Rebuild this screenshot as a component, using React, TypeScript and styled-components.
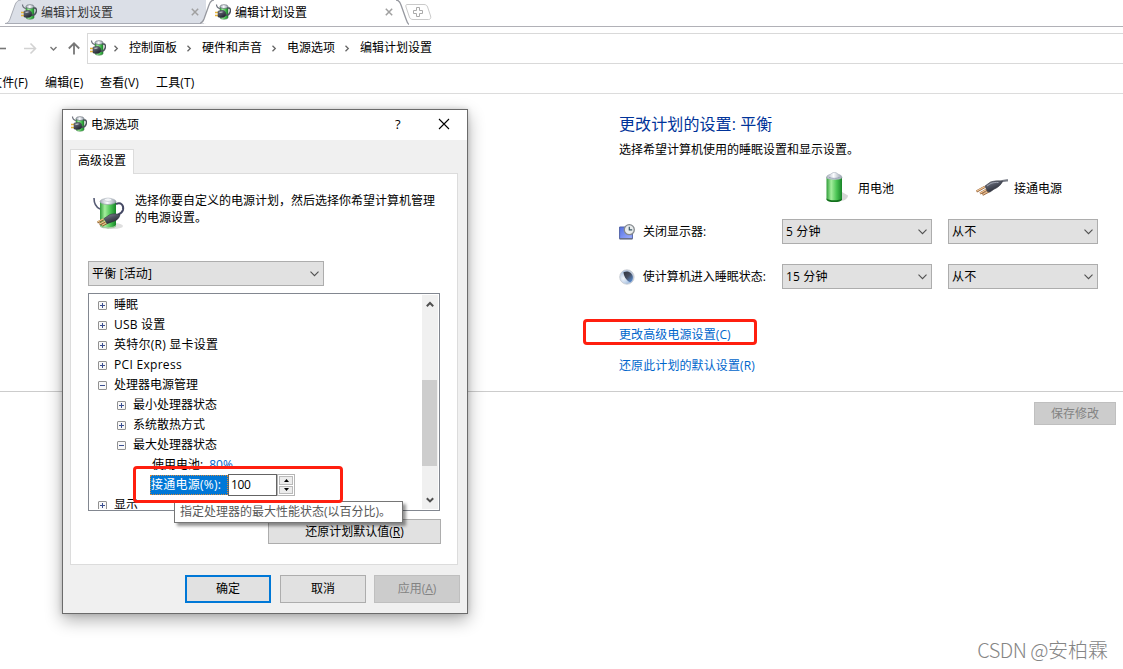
import styled, { createGlobalStyle } from 'styled-components';

const GlobalStyle = createGlobalStyle`
  * {
    box-sizing: border-box;
  }

  body {
    margin: 0;
    background: #fff;
    font-family: 'Open Sans', 'Noto Sans CJK SC', sans-serif;
    font-size: 12px;
    line-height: 17px;
    color: #000;
  }

  button, input {
    font: inherit;
  }
`;

const Screen = styled.div`
  position: relative;
  display: flex;
  flex-direction: column;
  width: 1123px;
  height: 669px;
  overflow: hidden;
  white-space: nowrap;
`;

/* ---------- browser like chrome ---------- */

const TabStrip = styled.div`
  display: flex;
  height: 27px;
  padding-left: 5px;
  border-bottom: 1px solid #b1b1b7;
`;

const Tab = styled.div<{ $width: number; $active?: boolean }>`
  position: relative;
  display: flex;
  flex: none;
  width: ${({ $width }) => $width}px;
  height: 25px;
  padding: ${({ $active }) => ($active ? '4px 16px 0 15px' : '4px 7px 0 16px')};
  margin-left: ${({ $active }) => ($active ? '-6px' : '0')};
  color: ${({ $active }) => ($active ? '#000' : '#333')};
`;

const TabShape = styled.svg`
  position: absolute;
  left: 0;
  top: 0;
`;

const TabLabel = styled.span`
  position: relative;
  flex: 1;
  padding-left: 4px;
  line-height: 17px;
`;

const TabIcon = styled.span`
  position: relative;
  height: 16px;
`;

const TabClose = styled.svg`
  position: relative;
  margin-top: 4px;
`;

const NewTab = styled.svg`
  margin: 3px 0 0 -5px;
`;

const NavRow = styled.div`
  display: flex;
  align-items: center;
  height: 31px;
  margin-top: 6px;
`;

const NavButtons = styled.svg`
  flex: none;
`;

const AddressBar = styled.div`
  display: flex;
  align-items: center;
  flex: 1;
  height: 31px;
  padding: 0 0 2px 2px;
  border: 1px solid #d9d9d9;
  border-right: 0;
`;

const Crumb = styled.span`
  display: flex;
  align-items: center;

  svg {
    margin: 2px 9px 0 8px;
  }

  &:nth-child(2) svg {
    margin-left: 6px;
  }
`;

const MenuRow = styled.div`
  display: flex;
  gap: 16px;
  height: 30px;
  padding-top: 10px;
  margin-left: -10px;
  border-bottom: 1px solid #dcdcdc;
`;

const MenuItem = styled.span<{ $width: number }>`
  width: ${({ $width }) => $width}px;
  letter-spacing: 0.15px;
`;

/* ---------- plan settings page ---------- */

const PlanPage = styled.main`
  height: 298px;
  padding: 19px 0 0 619px;
  border-bottom: 1px solid #ccc;
`;

const PlanTitle = styled.h1`
  margin: 0;
  font-size: 16px;
  font-weight: 400;
  line-height: 22px;
  letter-spacing: 0.1px;
  color: #003399;
`;

const PlanHint = styled.p`
  margin: 6px 0 0;
`;

const SettingsGrid = styled.div`
  display: grid;
  grid-template-columns: 147px 150px 150px;
  grid-template-rows: 56px 45px 25px;
  column-gap: 16px;
  align-items: start;
  margin-top: 5px;
`;

const ColumnHeader = styled.div<{ $indent: number; $gap: number }>`
  display: flex;
  align-items: center;
  gap: ${({ $gap }) => $gap}px;
  height: 50px;
  padding-left: ${({ $indent }) => $indent}px;
`;

const SettingLabel = styled.div`
  display: flex;
  align-items: center;
  gap: 8px;
  height: 25px;
`;

const Select = styled.div<{ $width: number }>`
  display: flex;
  align-items: center;
  justify-content: space-between;
  width: ${({ $width }) => $width}px;
  height: 25px;
  padding: 0 4px 0 3px;
  border: 1px solid #adadad;
  background: #e1e1e1;
  letter-spacing: 0.15px;
`;

const Links = styled.div`
  display: flex;
  flex-direction: column;
  gap: 14px;
  padding-top: 37px;
`;

const Link = styled.a`
  height: 17px;
  color: #0066cc;
  letter-spacing: 0.1px;
`;

const PlanFooter = styled.footer`
  display: flex;
  justify-content: flex-end;
  padding: 10px 7px 0 0;
`;

const Watermark = styled.div`
  position: absolute;
  right: 15px;
  bottom: 5px;
  font-family: 'Noto Sans CJK SC', sans-serif;
  font-size: 20px;
  font-weight: 300;
  line-height: 28px;
  color: #858585;

  span {
    letter-spacing: -0.5px;
  }
`;

/* ---------- dialog ---------- */

const Dialog = styled.section`
  position: absolute;
  left: 62px;
  top: 109px;
  display: flex;
  flex-direction: column;
  width: 406px;
  height: 505px;
  border: 1px solid #6b6b6b;
  background: #f0f0f0;
  box-shadow: 0 6px 16px rgba(0, 0, 0, 0.32), 0 0 5px rgba(0, 0, 0, 0.16);
`;

const TitleBar = styled.header`
  display: flex;
  align-items: center;
  height: 30px;
  padding: 0 17px 2px 8px;
  background: #fff;
`;

const TitleText = styled.span`
  flex: 1;
  padding-left: 4px;
`;

const HelpMark = styled.span`
  width: 43px;
  font-size: 13px;
`;

const SheetTab = styled.div`
  position: relative;
  width: 64px;
  height: 25px;
  margin: 9px 0 0 7px;
  padding: 2px 0 0 7px;
  border: 1px solid #dcdcdc;
  border-bottom: 0;
  background: #fff;
`;

const Sheet = styled.div`
  width: 388px;
  height: 392px;
  margin: -1px 0 0 7px;
  padding: 19px 0 0 17px;
  border: 1px solid #dcdcdc;
  background: #fff;
`;

const Intro = styled.div`
  display: flex;
  height: 68px;
  padding-left: 5px;

  svg {
    margin-top: 4px;
  }

  p {
    margin: -1px 0 0 10px;
    line-height: 17px;
  }
`;

const Tree = styled.div`
  position: relative;
  width: 352px;
  height: 218px;
  margin-top: 7px;
  border: 1px solid #828790;
  overflow: hidden;
`;

const TreeBody = styled.div`
  height: 215px;
  padding-top: 1px;
  overflow: hidden;
`;

const TreeRow = styled.div<{ $level: number }>`
  display: flex;
  align-items: center;
  height: 20px;
  padding-left: ${({ $level }) => 9 + $level * 19}px;
  line-height: 18px;
`;

const TreeText = styled.span<{ $spacing?: number }>`
  padding: 0 0 1px 7px;
  letter-spacing: ${({ $spacing }) => $spacing ?? 0}px;
`;

const LeafText = styled.span`
  padding-left: 16px;
`;

const LeafValue = styled.span`
  padding-left: 6px;
  color: #0066cc;
`;

const SelectedLabel = styled.span`
  width: 78px;
  height: 20px;
  margin-left: 14px;
  padding-left: 1px;
  outline: 1px dotted #d98a3a;
  outline-offset: -1px;
  background: #0078d7;
  color: #fff;
  line-height: 19px;
  letter-spacing: 0.25px;
`;

const ValueInput = styled.input`
  width: 49px;
  height: 22px;
  padding: 0 2px 2px;
  border: 1px solid #646464;
  outline: none;
  letter-spacing: -0.4px;
`;

const Spinner = styled.div`
  display: flex;
  flex-direction: column;
  width: 18px;
  height: 22px;
  padding: 1px;
  gap: 1px;
  border: 1px solid #b5b5b5;
  background: #fff;
`;

const SpinButton = styled.span`
  display: flex;
  flex: 1;
  align-items: center;
  justify-content: center;
  border: 1px solid #bababa;
  background: #ececec;
`;

const ScrollBar = styled.div`
  position: absolute;
  right: 1px;
  top: 1px;
  display: flex;
  flex-direction: column;
  align-items: center;
  width: 16px;
  height: 214px;
  padding: 6px 0 5px;
  background: #f0f0f0;

  svg:last-child {
    margin-top: auto;
  }
`;

const ScrollThumb = styled.div`
  width: 15px;
  height: 86px;
  margin: 72px 1px 0 0;
  background: #cdcdcd;
`;

const Button = styled.button<{ $width: number; $height: number; $primary?: boolean }>`
  width: ${({ $width }) => $width}px;
  height: ${({ $height }) => $height}px;
  margin-right: ${({ $primary }) => ($primary ? 1 : 0)}px;
  padding: 0 0 1px;
  border: ${({ $primary }) => ($primary ? '2px solid #0078d7' : '1px solid #adadad')};
  background: #e1e1e1;
  color: #000;
  line-height: 17px;

  &:disabled {
    border-color: #bfbfbf;
    background: #ccc;
    color: #838383;
  }
`;

const RestoreRow = styled.div`
  display: flex;
  padding: 8px 0 0 180px;
`;

const DialogButtons = styled.footer`
  display: flex;
  justify-content: flex-end;
  gap: 8px;
  padding: 10px 7px 0 0;
`;

const Tooltip = styled.div`
  position: absolute;
  left: 174px;
  top: 501px;
  width: 229px;
  height: 22px;
  padding: 1px 5px;
  border: 1px solid #767676;
  background: #fff;
  box-shadow: 3px 3px 3px rgba(0, 0, 0, 0.42);
  color: #575757;
`;

const Marker = styled.div<{ $x: number; $y: number; $w: number; $h: number }>`
  position: absolute;
  left: ${({ $x }) => $x}px;
  top: ${({ $y }) => $y}px;
  width: ${({ $w }) => $w}px;
  height: ${({ $h }) => $h}px;
  border: 3px solid #ff1f0f;
  border-radius: 4px;
`;

/* ---------- icons ---------- */

const Defs = styled.svg`
  position: absolute;
`;

const Gradients = () => (
  <Defs width="0" height="0" aria-hidden="true">
    <defs>
      <linearGradient id="cell" x1="0" x2="1">
        <stop offset="0" stopColor="#2f9d39" />
        <stop offset="0.3" stopColor="#a4ee9d" />
        <stop offset="0.65" stopColor="#4cc455" />
        <stop offset="1" stopColor="#178427" />
      </linearGradient>
      <linearGradient id="cap" x1="0" x2="1">
        <stop offset="0" stopColor="#a5adb9" />
        <stop offset="0.45" stopColor="#fbfcff" />
        <stop offset="1" stopColor="#98a1ad" />
      </linearGradient>
      <linearGradient id="plug" x1="0" y1="0" x2="0.6" y2="1">
        <stop offset="0" stopColor="#8a8e9c" />
        <stop offset="0.5" stopColor="#4e525f" />
        <stop offset="1" stopColor="#23252f" />
      </linearGradient>
      <linearGradient id="screen" x1="0" y1="0" x2="1" y2="1">
        <stop offset="0" stopColor="#5470e2" />
        <stop offset="1" stopColor="#a0b0ff" />
      </linearGradient>
      <radialGradient id="moon" cx="0.25" cy="0.6" r="0.8">
        <stop offset="0" stopColor="#f2f6fb" />
        <stop offset="0.6" stopColor="#a9c2e2" />
        <stop offset="1" stopColor="#c9cfd8" />
      </radialGradient>
      <linearGradient id="night" x1="0" y1="0" x2="0.8" y2="1">
        <stop offset="0" stopColor="#30343e" />
        <stop offset="0.5" stopColor="#444c5e" />
        <stop offset="1" stopColor="#5b8fd6" />
      </linearGradient>
    </defs>
  </Defs>
);

const PowerIcon = () => (
  <svg width="16" height="16" viewBox="0 0 16 16">
    <path d="M5 3v10.5c0 2.2 8 2.2 8 0V3z" fill="url(#cell)" stroke="#387b3e" strokeWidth="0.6" />
    <ellipse cx="9" cy="2.6" rx="4" ry="1.9" fill="url(#cap)" stroke="#687078" strokeWidth="0.7" />
    <path d="M1.500 .5c0 2 .8 3.3 3.5 4.2" fill="none" stroke="#6c707b" strokeWidth="1.2" />
    <path d="M12.5 4.2c3-1 3.3 1.7 2.6 4-.6 1.9-2.8 3.2-5 3" fill="none" stroke="#4d515c" strokeWidth="1.5" />
    <path d="M0 8.500h4M0 11.500h4" stroke="#e6b53a" strokeWidth="1.3" />
    <path d="M3 7.200l4-.9c2.600 0 4 1.700 3.900 3.900-.1 2.200-2 3.500-4.300 3.300L3 12.900z" fill="url(#plug)" stroke="#393d45" strokeWidth="0.5" />
    <path d="M4.500 8.500l3-.5" stroke="#c4c6ca" strokeWidth="1.2" />
  </svg>
);

const PowerIconLarge = () => (
  <svg width="32" height="34" viewBox="0 0 32 34">
    <ellipse cx="21" cy="29" rx="9" ry="3" fill="#c9c9c9" opacity="0.6" />
    <path d="M7 4.500v24c0 3.500 16 3.500 16 0v-24z" fill="url(#cell)" />
    <path d="M7 28v1c0 3.500 16 3.500 16 0v-1c-2 3-14 3-16 0z" fill="#a9c8a5" />
    <ellipse cx="15" cy="4.500" rx="8" ry="3" fill="url(#cap)" stroke="#9aa2ab" strokeWidth="0.7" />
    <ellipse cx="15" cy="2.700" rx="3.6" ry="1.800" fill="#f3f5f8" stroke="#b5bbc3" strokeWidth="0.5" />
    <path d="M1 1c0 5 1.500 9 6 11" fill="none" stroke="#565b74" strokeWidth="1.6" />
    <path d="M23 7c5-2 8 1 7 6-.8 2.500-3 4-5.500 5" fill="none" stroke="#454964" strokeWidth="2" />
    <path d="M4.500 25.500l6-3.200M6.500 27.500l5.500-2.800M9 28.700l4.500-2.400" stroke="#8a5d30" strokeWidth="2" />
    <path d="M4.500 25l6-3.200M6.500 27l5.500-2.800M9 28.200l4.500-2.400" stroke="#edc78c" strokeWidth="1.200" />
    <path d="M11 21.500l6-4c3-1 7-.8 10 .4-1 4-4 6-8 7l-5 1.800z" fill="url(#plug)" stroke="#2b2d38" strokeWidth="0.5" />
  </svg>
);

const BatteryIcon = () => (
  <svg width="24" height="32" viewBox="0 0 24 32">
    <path d="M15 29c5 0 8-3 8-5.500L17 20z" fill="#bdbdbd" opacity="0.6" />
    <path d="M1.500 5v22c0 3.400 15.500 3.400 15.500 0V5z" fill="url(#cell)" />
    <path d="M1.500 26.500V27.400c0 3.400 15.500 3.400 15.500 0v-.9c-2 2.400-13.500 2.400-15.500 0z" fill="#13701d" />
    <path d="M1.500 5.500C1.500 2.500 6 2.800 6.800 1.300 8 .2 11 .2 12 1.300c.8 1.500 5 1.200 5 4.200 0 2.600-15.500 2.600-15.500 0z" fill="url(#cap)" stroke="#a5adb9" strokeWidth="0.6" />
    <path d="M4 5.500c3 1.200 8 1.200 10.500 0" fill="none" stroke="#8792ab" strokeWidth="0.8" />
  </svg>
);

const PlugIcon = () => (
  <svg width="32" height="18" viewBox="0 0 32 18">
    <path d="M23 4C26 1.500 29 1.200 32 1.400" fill="none" stroke="#777b85" strokeWidth="2.400" />
    <path d="M.5 12.500L9 7.800M4 14.500l8-4.500M6.500 15.800l7-3.700" stroke="#8a5a36" strokeWidth="2.200" />
    <path d="M.5 12.200L9 7.600M4 14.200l8-4.500M6.500 15.500l7-3.700" stroke="#f2c795" strokeWidth="1.200" />
    <path d="M9 7L14.500 3c3-1 8.500-1.500 12-.8-1.500 4-4.500 6.200-8.500 8l-4 2.800-2.500-.5z" fill="url(#plug)" stroke="#343842" strokeWidth="0.6" />
    <path d="M11 7l4-2.600c3-1 5-1 7.500-.9" fill="none" stroke="#9ba0ad" strokeWidth="1" />
  </svg>
);

const DisplayIcon = () => (
  <svg width="16" height="16" viewBox="0 0 16 16">
    <path d="M.6 3h12.800v11.800H.6z" fill="url(#screen)" stroke="#5062a6" strokeWidth="1" />
    <path d="M.6 14.800h12.800" stroke="#6b6f78" strokeWidth="1.200" />
    <circle cx="10.300" cy="5.700" r="5" fill="#e9eced" stroke="#858a8e" strokeWidth="1.300" />
    <path d="M10.300 2.800v3.100h2.900" fill="none" stroke="#3f5a66" strokeWidth="1.200" />
  </svg>
);

const MoonIcon = () => (
  <svg width="16" height="16" viewBox="0 0 16 16">
    <circle cx="8" cy="8" r="7.300" fill="url(#moon)" stroke="#c3c7cd" strokeWidth="0.8" />
    <path d="M4.500 3.300C9 .8 14 4 14 8.500c0 2.300-1 4-2.700 5C9 12.500 5 9 4.500 3.300z" fill="url(#night)" />
  </svg>
);

const Chevron = () => (
  <svg width="9" height="6" viewBox="0 0 9 6">
    <path d="M.5.7l4 4 4-4" fill="none" stroke="#505050" strokeWidth="1.100" />
  </svg>
);

const CrumbArrow = () => (
  <svg width="8" height="7" viewBox="0 0 8 7">
    <path d="M2.500.7l2.800 2.800-2.800 2.800" fill="none" stroke="#666" strokeWidth="1.300" />
  </svg>
);

const CloseIcon = () => (
  <TabClose width="8" height="8" viewBox="0 0 8 8">
    <path d="M.8.8l6.400 6.400M7.200.8L.8 7.200" stroke="#a0a0a0" strokeWidth="1.500" />
  </TabClose>
);

const Expander = ({ open }: { open?: boolean }) => (
  <svg width="9" height="9" viewBox="0 0 9 9">
    <rect x="0.5" y="0.5" width="8" height="8" rx="0.500" fill="#f8f8f8" stroke="#919191" />
    <path d={open ? 'M2 4.500h5' : 'M2 4.500h5M4.500 2v5'} stroke="#3a4f91" />
  </svg>
);

const ScrollArrow = ({ down }: { down?: boolean }) => (
  <svg width="8" height="7" viewBox="0 0 8 7">
    <path d={down ? 'M.8 1.200L4 4.400l3.200-3.200' : 'M.8 5.200L4 2l3.200 3.200'} fill="none" stroke="#505050" strokeWidth="2" />
  </svg>
);

const SpinArrow = ({ down }: { down?: boolean }) => (
  <svg width="5" height="3" viewBox="0 0 5 3">
    <path d={down ? 'M0 0h5L2.500 3z' : 'M0 3h5L2.500 0z'} fill="#000" />
  </svg>
);

const crumbs = ['控制面板', '硬件和声音', '电源选项', '编辑计划设置'];

const treeItems = [
  { label: '睡眠', level: 0 },
  { label: 'USB 设置', level: 0, spacing: 0.2 },
  { label: '英特尔(R) 显卡设置', level: 0, spacing: 0.25 },
  { label: 'PCI Express', level: 0, spacing: 0.3 },
  { label: '处理器电源管理', level: 0, open: true },
  { label: '最小处理器状态', level: 1 },
  { label: '系统散热方式', level: 1 },
  { label: '最大处理器状态', level: 1, open: true },
];

const App = () => {
  return (
    <Screen>
      <GlobalStyle />
      <Gradients />

      <TabStrip>
        <Tab $width={201}>
          <TabShape width="201" height="25" viewBox="0 0 201 25">
            <path d="M0 23.500c3 0 4-2 5-4.500L10 5c1-3 3-5 6-5h185v23.500z" fill="#dbdfe7" />
            <path d="M0 23.500c3 0 4-2 5-4.500L10 5c1-3 3-5 6-5M0 23.500h199" fill="none" stroke="#a9acb5" />
          </TabShape>
          <TabIcon><PowerIcon /></TabIcon>
          <TabLabel>编辑计划设置</TabLabel>
          <CloseIcon />
        </Tab>
        <Tab $width={209} $active>
          <TabShape width="209" height="25" viewBox="0 0 209 25">
            <path d="M-1 23.500c3 0 4-2 5-4.500L9 5c1-3 3-5 5-5h182c3 0 4 2 5 5l5 14c1 3 2 5 4 5.500z" fill="#fff" />
            <path d="M-1 23.500c3 0 4-2 5-4.500L9 5c1-3 3-5 5-5M196 0c3 0 4 2 5 5l5 14c.8 2.500 1.500 4.500 3 5.500" fill="none" stroke="#96989f" strokeWidth="1.300" />
          </TabShape>
          <TabIcon><PowerIcon /></TabIcon>
          <TabLabel>编辑计划设置</TabLabel>
          <CloseIcon />
        </Tab>
        <NewTab width="28" height="18" viewBox="0 0 28 18">
          <path d="M3 1.500h17c2 0 3 1 3.600 2.500l3 9c.5 2-.2 3.500-2 3.500H9c-2 0-3-1-3.600-2.500L2 4c-.5-1.500 0-2.500 1-2.500z" fill="#fff" stroke="#cacaca" />
          <path d="M12.500 4.500h3v3h3v3h-3v3h-3v-3h-3v-3h3z" fill="#fff" stroke="#aaa" />
        </NewTab>
      </TabStrip>

      <NavRow>
        <NavButtons width="87" height="31" viewBox="0 0 87 31">
          <path d="M-4 15.500H6" stroke="#777" strokeWidth="1.600" />
          <path d="M24 15.500h11M30.500 10.500l5 5-5 5" fill="none" stroke="#d2d2d2" strokeWidth="1.600" />
          <path d="M50.500 14l3 3 3-3" fill="none" stroke="#777" strokeWidth="1.400" />
          <path d="M74 21.500V10.500M68.800 15.500l5.200-5.200 5.200 5.200" fill="none" stroke="#777" strokeWidth="1.800" />
        </NavButtons>
        <AddressBar>
          <PowerIcon />
          {crumbs.map((crumb) => (
            <Crumb key={crumb}>
              <CrumbArrow />
              {crumb}
            </Crumb>
          ))}
        </AddressBar>
      </NavRow>

      <MenuRow>
        <MenuItem $width={39}>文件(F)</MenuItem>
        <MenuItem $width={39}>编辑(E)</MenuItem>
        <MenuItem $width={40}>查看(V)</MenuItem>
        <MenuItem $width={40}>工具(T)</MenuItem>
      </MenuRow>

      <PlanPage>
        <PlanTitle>更改计划的设置: 平衡</PlanTitle>
        <PlanHint>选择希望计算机使用的睡眠设置和显示设置。</PlanHint>
        <SettingsGrid>
          <span />
          <ColumnHeader $indent={43} $gap={9}>
            <BatteryIcon />
            用电池
          </ColumnHeader>
          <ColumnHeader $indent={28} $gap={6}>
            <PlugIcon />
            接通电源
          </ColumnHeader>

          <SettingLabel>
            <DisplayIcon />
            关闭显示器:
          </SettingLabel>
          <Select $width={150}>5 分钟<Chevron /></Select>
          <Select $width={150}>从不<Chevron /></Select>

          <SettingLabel>
            <MoonIcon />
            使计算机进入睡眠状态:
          </SettingLabel>
          <Select $width={150}>15 分钟<Chevron /></Select>
          <Select $width={150}>从不<Chevron /></Select>
        </SettingsGrid>
        <Links>
          <Link>更改高级电源设置(C)</Link>
          <Link>还原此计划的默认设置(R)</Link>
        </Links>
      </PlanPage>

      <PlanFooter>
        <Button $width={82} $height={23} disabled>保存修改</Button>
      </PlanFooter>

      <Dialog>
        <TitleBar>
          <PowerIcon />
          <TitleText>电源选项</TitleText>
          <HelpMark>?</HelpMark>
          <svg width="12" height="12" viewBox="0 0 12 12">
            <path d="M1 1l10 10M11 1L1 11" stroke="#000" strokeWidth="1.100" />
          </svg>
        </TitleBar>

        <SheetTab>高级设置</SheetTab>
        <Sheet>
          <Intro>
            <PowerIconLarge />
            <p>
              选择你要自定义的电源计划，然后选择你希望计算机管理
              <br />
              的电源设置。
            </p>
          </Intro>
          <Select $width={236}>平衡 [活动]<Chevron /></Select>

          <Tree>
            <TreeBody>
              {treeItems.map(({ label, level, open, spacing }) => (
                <TreeRow key={label} $level={level}>
                  <Expander open={open} />
                  <TreeText $spacing={spacing}>{label}</TreeText>
                </TreeRow>
              ))}
              <TreeRow $level={2}>
                <LeafText>使用电池:</LeafText>
                <LeafValue>80%</LeafValue>
              </TreeRow>
              <TreeRow $level={2}>
                <SelectedLabel>接通电源(%):</SelectedLabel>
                <ValueInput defaultValue="100" />
                <Spinner>
                  <SpinButton><SpinArrow /></SpinButton>
                  <SpinButton><SpinArrow down /></SpinButton>
                </Spinner>
              </TreeRow>
              <TreeRow $level={0}>
                <Expander />
                <TreeText>显示</TreeText>
              </TreeRow>
            </TreeBody>
            <ScrollBar>
              <ScrollArrow />
              <ScrollThumb />
              <ScrollArrow down />
            </ScrollBar>
          </Tree>

          <RestoreRow>
            <Button $width={173} $height={25}>还原计划默认值(<u>R</u>)</Button>
          </RestoreRow>
        </Sheet>

        <DialogButtons>
          <Button $width={86} $height={28} $primary>确定</Button>
          <Button $width={86} $height={28}>取消</Button>
          <Button $width={86} $height={28} disabled>应用(<u>A</u>)</Button>
        </DialogButtons>
      </Dialog>

      <Tooltip>指定处理器的最大性能状态(以百分比)。</Tooltip>
      <Marker $x={133} $y={466} $w={210} $h={37} />
      <Marker $x={583} $y={319} $w={174} $h={26} />

      <Watermark><span>CSDN @</span>安柏霖</Watermark>
    </Screen>
  );
};

export default App;
